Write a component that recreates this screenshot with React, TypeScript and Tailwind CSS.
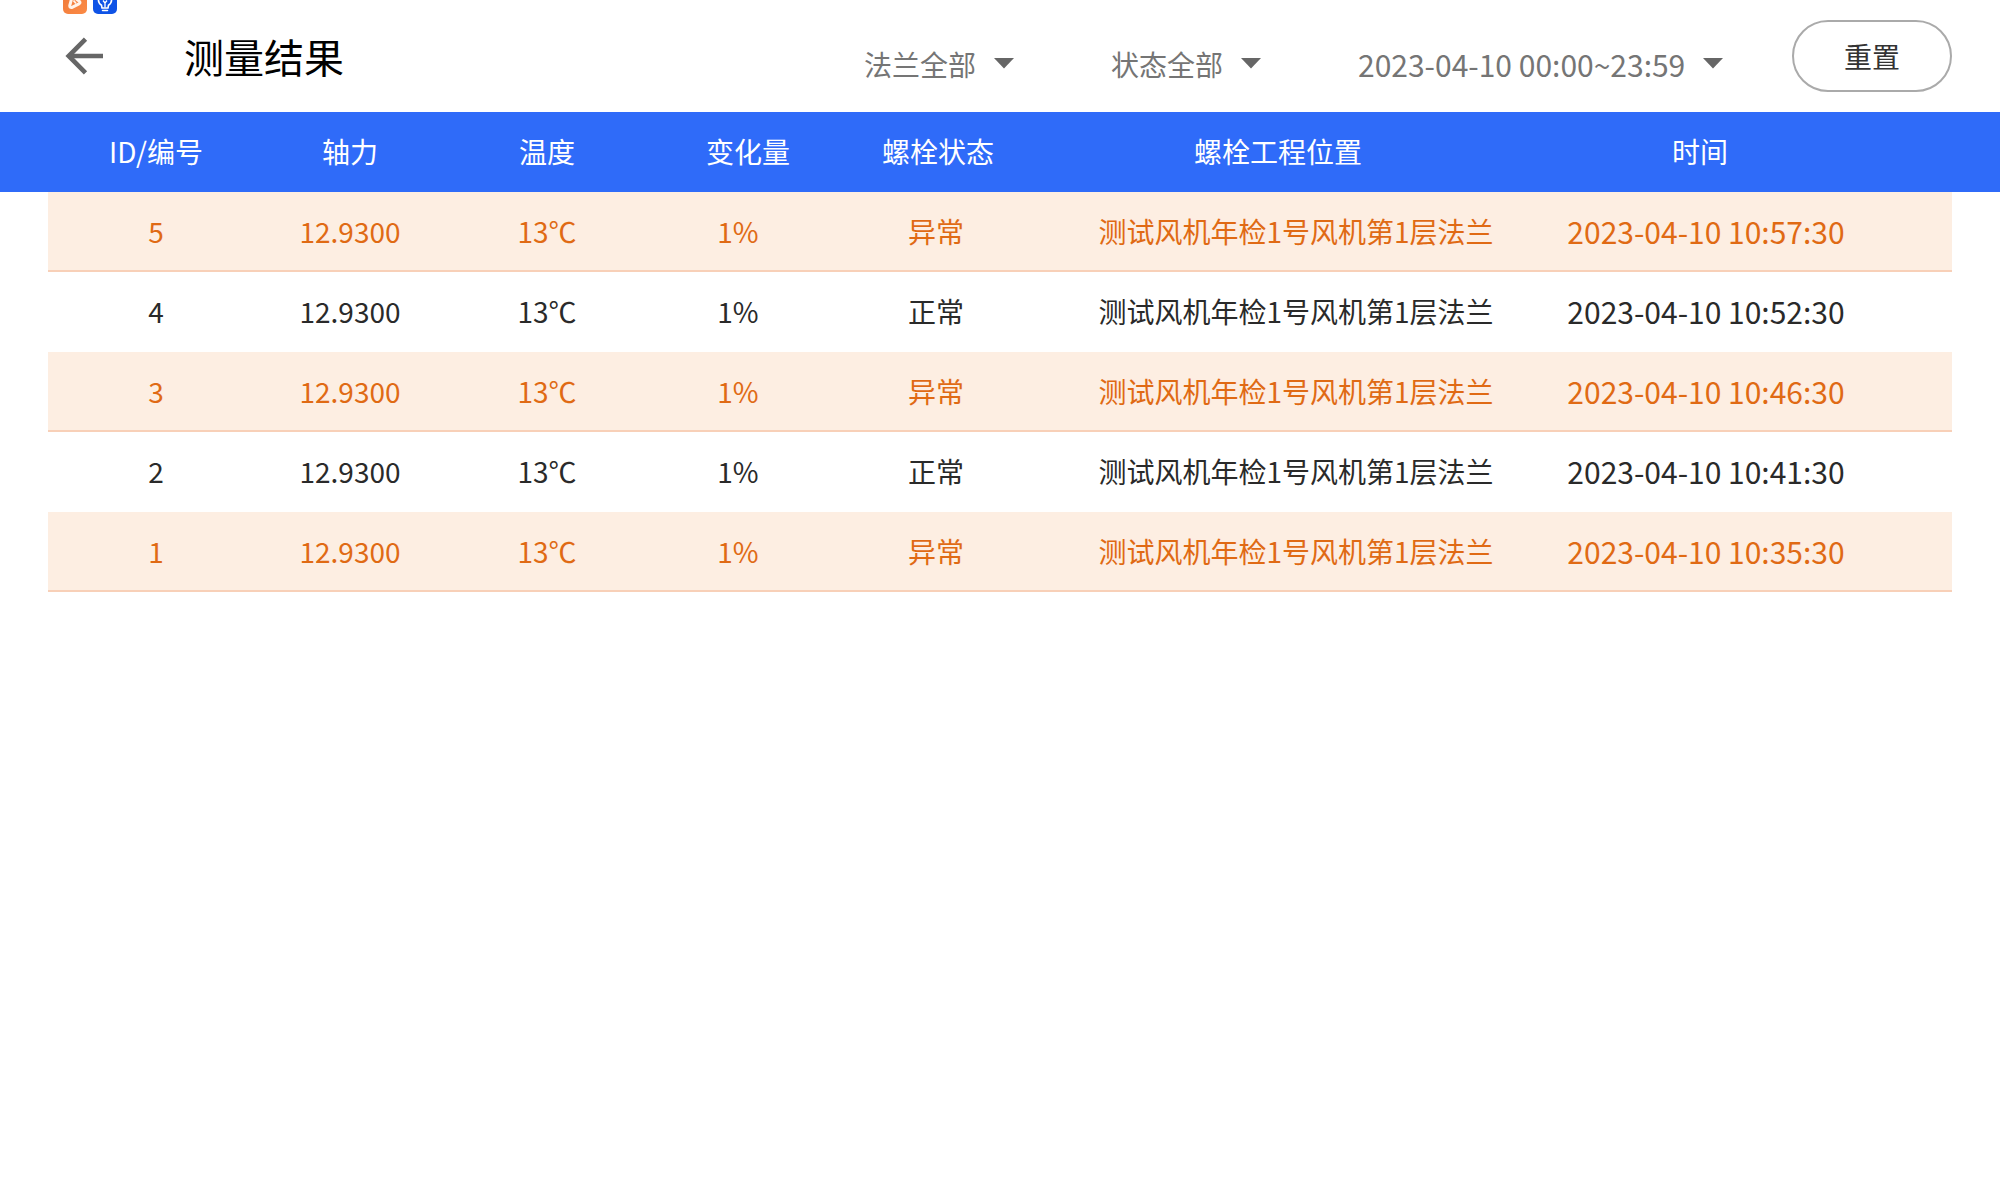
import { useState } from "react";
import clsx from "clsx";

type Row = {
  id: number;
  force: string;
  temp: string;
  change: string;
  abnormal: boolean;
  position: string;
  time: string;
};

const POSITION = "测试风机年检1号风机第1层法兰";

const rows: Row[] = [
  { id: 5, force: "12.9300", temp: "13℃", change: "1%", abnormal: true, position: POSITION, time: "2023-04-10 10:57:30" },
  { id: 4, force: "12.9300", temp: "13℃", change: "1%", abnormal: false, position: POSITION, time: "2023-04-10 10:52:30" },
  { id: 3, force: "12.9300", temp: "13℃", change: "1%", abnormal: true, position: POSITION, time: "2023-04-10 10:46:30" },
  { id: 2, force: "12.9300", temp: "13℃", change: "1%", abnormal: false, position: POSITION, time: "2023-04-10 10:41:30" },
  { id: 1, force: "12.9300", temp: "13℃", change: "1%", abnormal: true, position: POSITION, time: "2023-04-10 10:35:30" },
];

const columns = [
  { label: "ID/编号", width: "w-[10.8%]", pad: "" },
  { label: "轴力", width: "w-[8.6%]", pad: "" },
  { label: "温度", width: "w-[11.1%]", pad: "" },
  { label: "变化量", width: "w-[8%]", pad: "pl-5" },
  { label: "螺栓状态", width: "w-[11.8%]", pad: "pl-1" },
  { label: "螺栓工程位置", width: "w-[24.2%]", pad: "pr-9" },
  { label: "时间", width: "w-[16.8%]", pad: "pr-3" },
];

function StatusIcons() {
  return (
    <svg className="absolute left-[62px] top-0" width="56" height="15" viewBox="0 0 56 15" aria-hidden="true">
      <defs>
        <linearGradient id="orange" x1="0" y1="0" x2="1" y2="1">
          <stop offset="0" stopColor="#f07a3a" />
          <stop offset="1" stopColor="#fb8a45" />
        </linearGradient>
      </defs>
      <rect x="1" y="-10" width="24" height="24" rx="5" fill="url(#orange)" />
      <path d="M9.500 -1 L7.800 5.500 Q7.500 8 10.500 7.200 L17 3.800 Q19 2.500 17 1 L13 -2" fill="none" stroke="#fff3ea" strokeWidth="3" strokeLinejoin="round" />
      <path d="M11.500 0.500 L14 3.500" stroke="#fff3ea" strokeWidth="1.800" />
      <rect x="31" y="-10" width="24" height="24" rx="5" fill="#0f53e6" />
      <path d="M36.500 -1 Q36 3 39.500 5.200 L40 8 H46 L46.500 5.200 Q50 3 49.500 -1" fill="none" stroke="#fff" strokeWidth="1.600" strokeLinejoin="round" />
      <path d="M41 0.500 L43 3 L45 0.500 M43 3 V7.500" fill="none" stroke="#fff" strokeWidth="1.300" />
      <path d="M40.500 10.500 H45.500" stroke="#fff" strokeWidth="1.500" strokeLinecap="round" />
    </svg>
  );
}

function Filter({ label, value, options, onChange, className }: {
  label: string;
  value: string;
  options: string[];
  onChange: (v: string) => void;
  className?: string;
}) {
  return (
    <div className="flex items-center gap-4">
      <select
        aria-label={label}
        value={value}
        onChange={(e) => onChange(e.target.value)}
        className={clsx("h-12 appearance-none bg-transparent leading-[48px] text-[#757575] focus:outline-none", className)}
      >
        {options.map((o) => (
          <option key={o}>{o}</option>
        ))}
      </select>
      <svg width="22" height="16" viewBox="0 0 22 16" className="-mt-0.5" aria-hidden="true">
        <path d="M1 3 H21 L11 13.500 Z" fill="#666" />
      </svg>
    </div>
  );
}

export default function App() {
  const [flange, setFlange] = useState("法兰全部");
  const [status, setStatus] = useState("状态全部");
  const [range, setRange] = useState("2023-04-10 00:00~23:59");

  const reset = () => {
    setFlange("法兰全部");
    setStatus("状态全部");
    setRange("2023-04-10 00:00~23:59");
  };

  return (
    <div className="relative min-h-screen bg-white font-['Noto_Sans_CJK_SC',sans-serif] text-[28px] text-[#2a2a2a]">
      <StatusIcons />

      <header className="flex h-28 items-center justify-between pl-16 pr-12">
        <div className="flex items-center gap-20">
          <button type="button" aria-label="返回" className="flex">
            <svg width="40" height="40" viewBox="0 0 40 40" fill="none" stroke="#666" strokeWidth="4.600">
              <path d="M39 20 H5" />
              <path d="M21.500 3.200 L4.700 20 L21.500 36.800" />
            </svg>
          </button>
          <h1 className="text-[40px] leading-[56px] text-black">测量结果</h1>
        </div>

        <div className="flex items-center gap-[68px]">
          <div className="flex items-center gap-24 pt-4">
            <Filter label="法兰" value={flange} options={["法兰全部"]} onChange={setFlange} />
            <Filter label="状态" value={status} options={["状态全部"]} onChange={setStatus} />
            <Filter label="时间" value={range} options={["2023-04-10 00:00~23:59"]} onChange={setRange} className="text-[30px]" />
          </div>
          <button
            type="button"
            onClick={reset}
            className="h-[72px] w-40 rounded-full border-2 border-[#aaa] text-[#333]"
          >
            重置
          </button>
        </div>
      </header>

      <table className="w-full table-fixed border-separate border-spacing-0 text-center">
        <colgroup>
          <col className="w-12" />
          {columns.map((c) => (
            <col key={c.label} className={c.width} />
          ))}
          <col />
          <col className="w-12" />
        </colgroup>
        <thead>
          <tr className="h-20 bg-[#2f6bf9] text-white *:border-b-2 *:border-[#2f6bf9]">
            <td />
            {columns.map((c) => (
              <th key={c.label} scope="col" className={clsx("whitespace-nowrap font-normal", c.pad)}>
                {c.label}
              </th>
            ))}
            <td />
            <td />
          </tr>
        </thead>
        <tbody>
          {rows.map((r) => (
            <tr
              key={r.id}
              className={clsx(
                "h-20 whitespace-nowrap *:border-b-2 *:first:border-transparent *:last:border-transparent",
                r.abnormal
                  ? "text-[#e06a14] *:not-first:not-last:border-[#f8d0b8] *:not-first:not-last:bg-[#fdeee2]"
                  : "*:border-transparent",
              )}
            >
              <td />
              <td>{r.id}</td>
              <td>{r.force}</td>
              <td>{r.temp}</td>
              <td>{r.change}</td>
              <td>{r.abnormal ? "异常" : "正常"}</td>
              <td>{r.position}</td>
              <td className="text-[30px]">{r.time}</td>
              <td />
              <td />
            </tr>
          ))}
        </tbody>
      </table>
    </div>
  );
}
